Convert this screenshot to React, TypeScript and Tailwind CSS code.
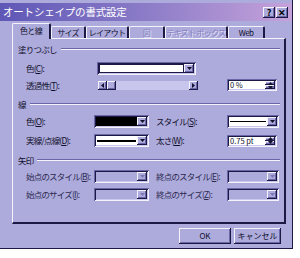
import type { ReactNode } from 'react';

// Win98-style bevels, tinted to the lavender theme
const raised = 'shadow-[inset_-1px_-1px_0_#1c1a44,inset_1px_1px_0_#f4f3fc,inset_-2px_-2px_0_#6a66a8]';
const sunken = 'shadow-[inset_1px_1px_0_#6a66a8,inset_-1px_-1px_0_#f4f3fc,inset_2px_2px_0_#1c1a44,inset_-2px_-2px_0_#c9c7ec]';

function Arrow({ dir = 'down', dim = false }: { dir?: 'down' | 'up' | 'left' | 'right'; dim?: boolean }) {
  const pts = {
    down: '0,0 5,0 2.5,3',
    up: '0,3 5,3 2.5,0',
    left: '3,0 3,5 0,2.5',
    right: '0,0 0,5 3,2.5',
  }[dir];
  const v = dir === 'left' || dir === 'right';
  return (
    <svg width={v ? 3 : 5} height={v ? 5 : 3} viewBox={v ? '0 0 3 5' : '0 0 5 3'}>
      <polygon points={pts} fill={dim ? '#7c78b4' : '#10102a'} />
    </svg>
  );
}

function DropBtn({ dim = false }: { dim?: boolean }) {
  return (
    <div className={`flex h-full w-[10px] shrink-0 items-center justify-center bg-[#adaadc] ${raised}`}>
      <Arrow dim={dim} />
    </div>
  );
}

function Combo({ w, children, dim = false, focus = false }: { w: string; children?: ReactNode; dim?: boolean; focus?: boolean }) {
  return (
    <div className={`flex h-[13px] ${w} p-[2px] ${dim ? 'bg-[#adaadc]' : 'bg-white'} ${sunken}`}>
      <div className={`flex min-w-0 flex-1 items-center ${focus ? 'border border-[#1c1a44]' : ''}`}>{children}</div>
      <DropBtn dim={dim} />
    </div>
  );
}

function Spin({ value }: { value: string }) {
  return (
    <div className={`flex h-[12px] w-[50px] bg-white p-[2px] ${sunken}`}>
      <div className="flex flex-1 items-center pl-[1px] text-[7.5px] leading-none text-[#10102a]">{value}</div>
      <div className="flex w-[10px] flex-col">
        <div className={`flex flex-1 items-center justify-center bg-[#adaadc] ${raised}`}><Arrow dir="up" /></div>
        <div className={`flex flex-1 items-center justify-center bg-[#adaadc] ${raised}`}><Arrow dir="down" /></div>
      </div>
    </div>
  );
}

function Label({ children, dim = false, w }: { children: ReactNode; dim?: boolean; w: string }) {
  return (
    <div className={`${w} shrink-0 whitespace-nowrap text-[8.5px] leading-none tracking-[-0.8px] ${dim ? 'text-[#2c2a50]' : 'text-[#10102a]'}`}>
      {children}
    </div>
  );
}

function Group({ title }: { title: string }) {
  return (
    <div className="flex h-[10px] items-center gap-[4px] pl-[5px] pr-[4px]">
      <span className="text-[8.5px] leading-none tracking-[-0.8px] text-[#10102a]">{title}</span>
      <div className="h-[2px] flex-1 border-t border-b border-t-[#6a66a8] border-b-[#f4f3fc]" />
    </div>
  );
}

function Tab({ label, w, active = false, dim = false }: { label: string; w: string; active?: boolean; dim?: boolean }) {
  return (
    <div
      className={`flex ${w} items-center justify-center rounded-t-[2px] border-t border-l border-r-2 border-t-[#f4f3fc] border-l-[#f4f3fc] border-r-[#1c1a44] bg-[#adaadc] text-[8px] leading-none tracking-[-0.7px] ${
        active ? 'relative z-10 -mb-px h-[16px] pb-[1px]' : 'h-[12px]'
      } ${dim ? 'text-[#8480bc] [text-shadow:1px_1px_0_#e8e6fa]' : 'text-[#10102a]'}`}
    >
      {label}
    </div>
  );
}

function Btn({ children, w }: { children: ReactNode; w: string }) {
  return (
    <div className={`flex h-[16px] ${w} items-center justify-center bg-[#adaadc] text-[8px] leading-none text-[#10102a] ${raised}`}>
      {children}
    </div>
  );
}

export default function App() {
  return (
    <div className="h-[258px] w-[300px] bg-white font-['Noto_Sans_CJK_JP','Noto_Sans',sans-serif]">
      <div className="flex h-[249px] w-[293px] flex-col border-r border-b border-r-[#1c1a44] border-b-[#1c1a44] bg-[#adaadc] pt-[3px]">
        {/* title bar */}
        <div className="flex h-[18px] items-center justify-between bg-gradient-to-r from-[#5f57b6] via-[#8c7cc8] to-[#c6a2da] pl-[3px] pr-[4px]">
          <span className="text-[10.5px] leading-none tracking-[-0.2px] text-white">オートシェイプの書式設定</span>
          <div className="flex gap-[1px]">
            <div className={`flex h-[11px] w-[12px] items-center justify-center bg-[#adaadc] text-[9px] font-bold leading-none text-black ${raised}`}>?</div>
            <div className={`flex h-[11px] w-[12px] items-center justify-center bg-[#adaadc] text-[9px] font-bold leading-none text-black ${raised}`}>✕</div>
          </div>
        </div>

        {/* tabs */}
        <div className="mt-[2px] flex items-end pl-[12px]">
          <Tab label="色と線" w="w-[39px]" active />
          <Tab label="サイズ" w="w-[35px]" />
          <Tab label="レイアウト" w="w-[43px]" />
          <Tab label="図" w="w-[36px]" dim />
          <Tab label="テキスト ボックス" w="w-[63px]" dim />
          <Tab label="Web" w="w-[37px]" />
        </div>

        {/* panel */}
        <div className="ml-[12px] h-[186px] w-[274px] border-t border-l border-r-2 border-b-2 border-t-[#f4f3fc] border-l-[#f4f3fc] border-r-[#1c1a44] border-b-[#1c1a44] pt-[5px]">
          <Group title="塗りつぶし" />
          <div className="mt-[8px] flex items-center pl-[13px]">
            <Label w="w-[71px]">色(<u>C</u>):</Label>
            <Combo w="w-[99px]" focus>
              <div className="h-full w-full bg-white" />
            </Combo>
          </div>
          <div className="mt-[4px] flex items-center pl-[13px]">
            <Label w="w-[72px]">透過性(<u>T</u>):</Label>
            <div className="flex h-[9px] w-[100px]">
              <div className={`flex w-[9px] items-center justify-center bg-[#adaadc] ${raised}`}><Arrow dir="left" /></div>
              <div className={`w-[9px] bg-[#adaadc] ${raised}`} />
              <div className="flex-1 bg-[#c8c6ec]" />
              <div className={`flex w-[9px] items-center justify-center bg-[#adaadc] ${raised}`}><Arrow dir="right" /></div>
            </div>
            <div className="ml-[29px]"><Spin value="0 %" /></div>
          </div>

          <div className="mt-[8px]"><Group title="線" /></div>
          <div className="mt-[6px] flex items-center pl-[13px]">
            <Label w="w-[68px]">色(<u>O</u>):</Label>
            <Combo w="w-[55px]">
              <div className="h-full w-full bg-black" />
            </Combo>
            <Label w="w-[71px] ml-[7px]">スタイル(<u>S</u>):</Label>
            <Combo w="w-[52px]">
              <div className="mx-[1px] h-px w-full bg-black" />
            </Combo>
          </div>
          <div className="mt-[6px] flex items-center pl-[13px]">
            <Label w="w-[68px]">実線/点線(<u>D</u>):</Label>
            <Combo w="w-[55px]">
              <div className="mx-[1px] h-[2px] w-full bg-black" />
            </Combo>
            <Label w="w-[71px] ml-[7px]">太さ(<u>W</u>):</Label>
            <Spin value="0.75 pt" />
          </div>

          <div className="mt-[8px]"><Group title="矢印" /></div>
          <div className="mt-[5px] flex items-center pl-[13px]">
            <Label w="w-[68px]" dim>始点のスタイル(<u>B</u>):</Label>
            <Combo w="w-[55px]" dim />
            <Label w="w-[71px] ml-[7px]" dim>終点のスタイル(<u>E</u>):</Label>
            <Combo w="w-[52px]" dim />
          </div>
          <div className="mt-[5px] flex items-center pl-[13px]">
            <Label w="w-[68px]" dim>始点のサイズ(<u>I</u>):</Label>
            <Combo w="w-[55px]" dim />
            <Label w="w-[71px] ml-[7px]" dim>終点のサイズ(<u>Z</u>):</Label>
            <Combo w="w-[52px]" dim />
          </div>
        </div>

        {/* buttons */}
        <div className="mt-[4px] flex justify-end gap-[3px] pr-[11px]">
          <Btn w="w-[52px]">OK</Btn>
          <Btn w="w-[47px]">キャンセル</Btn>
        </div>
      </div>
    </div>
  );
}
